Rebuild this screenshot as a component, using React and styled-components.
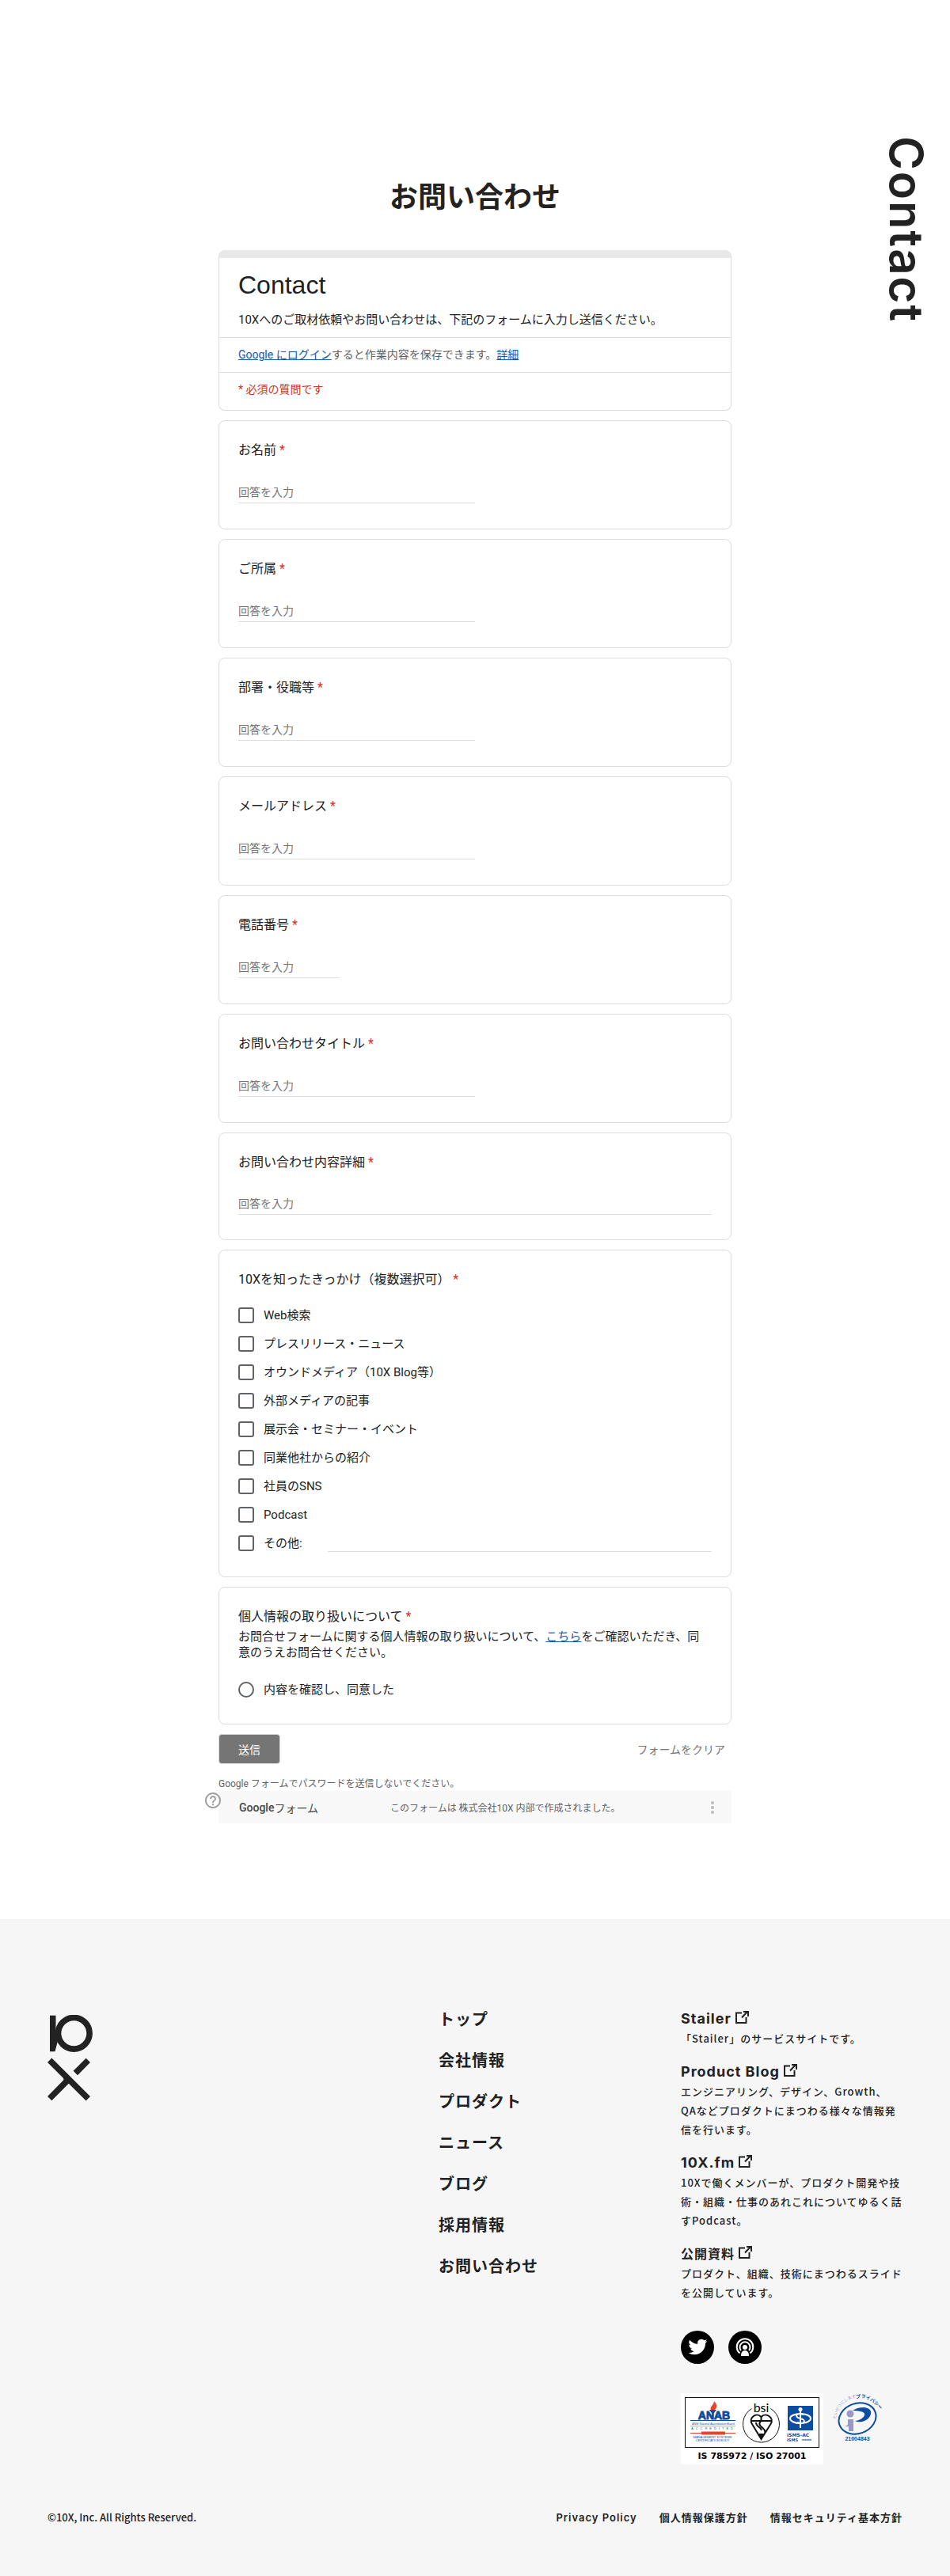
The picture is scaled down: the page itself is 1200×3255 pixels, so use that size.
import React from "react";
import styled, { createGlobalStyle } from "styled-components";

const jp = '"Noto Sans CJK JP", sans-serif';

const Global = createGlobalStyle`
  *, *::before, *::after { box-sizing: border-box; }
  body { margin: 0; background: #fff; color: #222; font-family: ${jp}; }
  h1, h2, p, ul, fieldset { margin: 0; padding: 0; border: 0; }
  ul { list-style: none; }
  a { color: inherit; text-decoration: none; }
  button, input { font: inherit; }
`;

const Main = styled.main`
  display: grid;
  grid-template-columns: minmax(0, 1fr) minmax(0, 648px) minmax(0, 1fr);
  padding-bottom: 121px;
`;
const Center = styled.div`grid-column: 2;`;
const PageTitle = styled.h1`
  padding-top: 218px;
  font-size: 36px;
  line-height: 56px;
  font-weight: 700;
  text-align: center;
`;
const SideTitle = styled.p`
  justify-self: end;
  margin: 172px 25px 0 0;
  writing-mode: vertical-rl;
  font: 600 58px/60px Inter, sans-serif;
  letter-spacing: 2px;
`;
const Form = styled.form`
  display: flex;
  flex-direction: column;
  gap: 12px;
  margin-top: 42px;
  font-family: Roboto, ${jp};
  color: #202124;
`;
const Card = styled.section`
  border: 1px solid #dadce0;
  border-radius: 8px;
  background: #fff;
`;
const IntroCard = styled(Card)`
  overflow: hidden;
  border-top: 10px solid #e8e8e8;
`;
const Intro = styled.div`
  padding: 12px 24px 11px;
  h2 { font: 400 32px/44px "Liberation Sans", sans-serif; }
  p { margin-top: 11px; font-size: 15px; line-height: 22px; }
`;
const Notice = styled.p`
  border-top: 1px solid #dadce0;
  padding: 11px 24px;
  font-size: 14px;
  line-height: 21px;
  color: ${(p) => (p.$alert ? "#c5372c" : "#5f6368")};
  ${(p) => p.$alert && "padding-bottom: 15px;"}
`;
const BlueLink = styled.a`
  color: #1558b0;
  text-decoration: underline;
`;
const Question = styled(Card)`
  padding: 25px 24px ${(p) => p.$bottom || "32px"};
`;
const Heading = styled.label`
  display: block;
  font-size: 16px;
  line-height: 24px;
`;
const Star = styled.span`
  color: #d93025;
  &::before { content: " "; }
`;
const TextBox = styled.input`
  display: block;
  width: ${(p) => p.$width};
  margin-top: ${(p) => (p.$short ? "26px" : "27px")};
  height: 28px;
  padding: 0;
  border: 0;
  border-bottom: 1px solid #dadce0;
  border-radius: 0;
  outline: 0;
  background: transparent;
  font-size: 14px;
  line-height: 24px;
  &::placeholder { color: #70757a; opacity: 1; }
`;
const Options = styled.div`
  display: flex;
  flex-direction: column;
  gap: 12px;
  margin-top: 21px;
`;
const Option = styled.div`
  display: flex;
  align-items: center;
  height: 24px;
  font-size: 15px;
  line-height: 24px;
  label { padding-left: 12px; }
`;
const Tick = styled.input`
  appearance: none;
  flex: none;
  width: 20px;
  height: 20px;
  margin: 0;
  border: 2px solid #5f6368;
  border-radius: ${(p) => (p.type === "radio" ? "50%" : "3px")};
  &:checked { background: #5f6368; }
`;
const OtherBox = styled.input`
  flex: 1;
  align-self: flex-start;
  min-width: 0;
  height: 23px;
  margin-left: 32px;
  padding: 0;
  border: 0;
  border-bottom: 1px solid #dadce0;
  outline: 0;
  background: transparent;
`;
const Consent = styled.p`
  padding-right: 8px;
  font-size: 15px;
  line-height: 20px;
  margin: 3px 0 25px;
`;
const Actions = styled.div`
  display: flex;
  justify-content: space-between;
  align-items: center;
  height: 38px;
`;
const Submit = styled.button`
  height: 38px;
  padding: 0 24px;
  border: 1px solid #ddd;
  border-radius: 4px;
  background: #757575;
  color: #fff;
  font-size: 14px;
`;
const Clear = styled.button`
  border: 0;
  padding: 0 8px;
  background: none;
  color: #757575;
  font-size: 14px;
`;
const Warning = styled.p`
  padding-top: 4px;
  font-size: 12px;
  line-height: 18px;
  color: #5f6368;
`;
const FormFoot = styled.div`
  position: relative;
  display: flex;
  align-items: center;
  height: 41px;
  padding: 0 22px 0 26px;
  background: #f8f8f8;
  color: #5f6368;
`;
const Brand = styled.a`
  display: flex;
  align-items: center;
  width: 191px;
  color: #444746;
  font-size: 14px;
  span { font: 500 14px Roboto, sans-serif; }
`;
const MadeBy = styled.p`
  flex: 1;
  font-size: 12px;
`;
const More = styled.button`
  display: grid;
  gap: 2px;
  padding: 0;
  border: 0;
  background: none;
  i { width: 4px; height: 4px; border-radius: 50%; background: #bdbdbd; }
`;
const Help = styled.button`
  position: absolute;
  left: -19px;
  top: 0;
  width: 24px;
  height: 24px;
  padding: 0;
  border: 0;
  background: none;
  svg { display: block; }
`;

const Footer = styled.footer`
  padding: 112px 60px 62px;
  background: #f6f6f6;
`;
const Columns = styled.div`
  display: grid;
  grid-template-columns: minmax(0, 494px) minmax(0, 306px) minmax(0, 280px);
  justify-content: space-between;
`;
const Logo = styled.svg`
  display: block;
  margin-top: 9px;
`;
const Nav = styled.ul`
  display: flex;
  flex-direction: column;
  gap: 24px;
  font-size: 20px;
  line-height: 28px;
  font-weight: 700;
  letter-spacing: 1px;
`;
const Product = styled.div`
  margin-bottom: 16px;
  p { font-size: 13px; line-height: 24px; font-weight: 500; letter-spacing: 1px; }
`;
const ProductLink = styled.a`
  display: flex;
  align-items: center;
  gap: 4px;
  height: 27px;
  font: ${(p) => (p.$jp ? `700 16px/27px ${jp}` : "700 18px/27px Inter, sans-serif")};
  letter-spacing: 1px;
  svg { display: block; margin-bottom: 3px; }
`;
const Social = styled.div`
  display: flex;
  gap: 18px;
  margin-top: 36px;
  a { display: block; height: 42px; }
`;
const Badges = styled.div`
  display: flex;
  align-items: flex-start;
  gap: 12px;
  margin-top: 37px;
  svg { display: block; overflow: visible; }
`;
const Bottom = styled.div`
  display: flex;
  justify-content: space-between;
  margin-top: 55px;
  font-size: 13px;
  line-height: 24px;
`;
const Copyright = styled.p`font-weight: 500;`;
const Legal = styled.div`
  display: flex;
  gap: 28px;
  font-weight: 700;
  letter-spacing: 1px;
`;
const PrivacyLink = styled.a`font: 600 13px/24px Inter, sans-serif;`;

const fields = [
  ["name", "お名前", "50%"],
  ["company", "ご所属", "50%"],
  ["role", "部署・役職等", "50%"],
  ["mail", "メールアドレス", "50%"],
  ["tel", "電話番号", "128px"],
  ["subject", "お問い合わせタイトル", "50%"],
  ["detail", "お問い合わせ内容詳細", "100%", true],
];
const sources = ["Web検索", "プレスリリース・ニュース", "オウンドメディア（10X Blog等）", "外部メディアの記事", "展示会・セミナー・イベント", "同業他社からの紹介", "社員のSNS", "Podcast", "その他:"];
const nav = ["トップ", "会社情報", "プロダクト", "ニュース", "ブログ", "採用情報", "お問い合わせ"];
const products = [
  ["Stailer", "「Stailer」のサービスサイトです。"],
  ["Product Blog", "エンジニアリング、デザイン、Growth、QAなどプロダクトにまつわる様々な情報発信を行います。"],
  ["10X.fm", "10Xで働くメンバーが、プロダクト開発や技術・組織・仕事のあれこれについてゆるく話すPodcast。"],
  ["公開資料", "プロダクト、組織、技術にまつわるスライドを公開しています。", true],
];

const External = () => (
  <svg width="18" height="18" viewBox="0 0 18 18" fill="none" stroke="#222" strokeWidth="2">
    <path d="M9 3.500H2V16h12.500V9M11 2h6v6M16.500 1.500L9 9.500" />
  </svg>
);

const IsoBadge = () => (
  <svg width="180" height="90" viewBox="0 0 180 90" role="img" aria-label="IS 785972 / ISO 27001">
    <rect width="180" height="90" fill="#fff" />
    <rect x="5.500" y="5.500" width="169" height="63" fill="none" stroke="#111" />
    <path d="M38 21c-2-4 4-6 4-11 4 4 4 8 1 11z" fill="#e8432e" />
    <path d="M36 21h9l-3 4h-3z" fill="#0d4da1" />
    <g fill="#0d4da1" fontFamily="Liberation Sans, sans-serif" textAnchor="middle">
      <text x="42" y="32.500" fontSize="14" fontWeight="700" stroke="#0d4da1" strokeWidth="1">ANAB</text>
      <rect x="12" y="34" width="57" height="1" />
      <text x="41" y="39.500" fontSize="3.500" fontStyle="italic">ANSI National Accreditation Board</text>
      <rect x="12" y="41" width="57" height="1" opacity=".4" />
      <text x="41" y="46" fontSize="4" letterSpacing="3">ACCREDITED</text>
      <text x="40" y="57" fontSize="4">MANAGEMENT SYSTEMS</text>
      <text x="40" y="61" fontSize="4">CERTIFICATION BODY</text>
    </g>
    <path d="M12 50.500h57" stroke="#e8432e" />
    <rect x="26" y="48.500" width="30" height="4" fill="#e8432e" />
    <path d="M89.500 19.500a23 23 0 1 0 24 0" fill="none" stroke="#111" strokeWidth="1" />
    <text x="101.500" y="24" fontSize="16" textAnchor="middle" fontFamily="Lato, sans-serif">bsi</text>
    <path d="M101.500 58L90 39c-5-7 5-16 11.500-9 6.500-7 17 2 12 9zM89 35h26M101.500 30v5M101.500 35c-8 7 9 9 4 17M95 37c0 6 6 5 7 10" fill="none" stroke="#111" strokeWidth="2" />
    <path d="M98 51h7l-3.500 7z" fill="#111" />
    <rect x="135" y="16" width="32" height="31" fill="#0d4da1" />
    <g fill="none" stroke="#fff" strokeWidth="2">
      <ellipse cx="151" cy="32" rx="13" ry="6" />
      <path d="M155 27c-11-3-11 4-4 5s7 8-4 5M151 23v21" />
    </g>
    <circle cx="151" cy="20.500" r="2.500" fill="#fff" />
    <g fill="#0d4da1" fontFamily="DejaVu Sans, sans-serif" fontWeight="700">
      <text x="134" y="54.500" fontSize="6">iSMS-AC</text>
      <text x="134" y="60.500" fontSize="5">ISMS</text>
      <text x="153" y="60" fontSize="3">ISR000</text>
    </g>
    <text x="90" y="83" fontSize="11" fontWeight="700" textAnchor="middle" fontFamily="DejaVu Sans, sans-serif">IS 785972 / ISO 27001</text>
  </svg>
);

const PrivacyMark = () => (
  <svg width="62" height="62" viewBox="0 0 62 62" role="img" aria-label="プライバシーマーク 21004843">
    <defs>
      <path id="arc" d="M4 33C6 6 40 -8 62 24" />
    </defs>
    <text fontFamily="Noto Sans CJK JP, sans-serif" fontSize="5" fill="#9a97c9">
      <textPath href="#arc">たいせつにします<tspan fontSize="6" fontWeight="700" fill="#0d4da1">プライバシー</tspan></textPath>
    </text>
    <ellipse cx="31" cy="32" rx="24" ry="19" transform="rotate(-20 31 32)" fill="none" stroke="#0d4da1" strokeWidth="2" />
    <path d="M25 22c10-7 28-5 22 7-4 7-14 9-19 6 6 0 13-5 12-9-1-3-8-4-15-4z" fill="#0d4da1" />
    <circle cx="22" cy="26" r="4.500" fill="#9a97c9" />
    <path d="M19 33h7v15h-6v-6h-5l4-2z" fill="#9a97c9" />
    <text x="31" y="60" fontFamily="Liberation Sans, sans-serif" fontSize="7" textAnchor="middle" fontWeight="700" fill="#0d4da1">21004843</text>
  </svg>
);

export default function App() {
  return (
    <>
      <Global />
      <Main>
        <Center>
          <PageTitle>お問い合わせ</PageTitle>
          <Form onSubmit={(e) => e.preventDefault()}>
            <IntroCard>
              <Intro>
                <h2>Contact</h2>
                <p>10Xへのご取材依頼やお問い合わせは、下記のフォームに入力し送信ください。</p>
              </Intro>
              <Notice><BlueLink href="#login">Google にログイン</BlueLink>すると作業内容を保存できます。<BlueLink href="#more">詳細</BlueLink></Notice>
              <Notice $alert>* 必須の質問です</Notice>
            </IntroCard>
            {fields.map(([id, label, width, short]) => (
              <Question key={id} $bottom={short ? "31px" : "32px"}>
                <Heading htmlFor={id}>{label}<Star>*</Star></Heading>
                <TextBox id={id} placeholder="回答を入力" $width={width} $short={short} />
              </Question>
            ))}
            <Question $bottom="30px">
              <Heading as="p">10Xを知ったきっかけ（複数選択可）<Star>*</Star></Heading>
              <Options>
                {sources.map((s, i) => (
                  <Option key={s}>
                    <Tick type="checkbox" id={`source${i}`} />
                    <label htmlFor={`source${i}`}>{s}</label>
                    {i === sources.length - 1 && <OtherBox aria-label="その他の回答" />}
                  </Option>
                ))}
              </Options>
            </Question>
            <Question $bottom="31px">
              <Heading as="p">個人情報の取り扱いについて<Star>*</Star></Heading>
              <Consent>お問合せフォームに関する個人情報の取り扱いについて、<BlueLink href="#privacy">こちら</BlueLink>をご確認いただき、同意のうえお問合せください。</Consent>
              <Option>
                <Tick type="radio" id="agree" />
                <label htmlFor="agree">内容を確認し、同意した</label>
              </Option>
            </Question>
            <Actions>
              <Submit type="submit">送信</Submit>
              <Clear type="reset">フォームをクリア</Clear>
            </Actions>
            <div>
              <Warning>Google フォームでパスワードを送信しないでください。</Warning>
              <FormFoot>
                <Help type="button" aria-label="ヘルプ">
                  <svg width="24" height="24" viewBox="0 0 24 24" fill="#9e9e9e"><path d="M11 18h2v-2h-2v2zm1-16C6.480 2 2 6.480 2 12s4.480 10 10 10 10-4.480 10-10S17.520 2 12 2zm0 18c-4.410 0-8-3.590-8-8s3.590-8 8-8 8 3.590 8 8-3.590 8-8 8zm0-14c-2.210 0-4 1.790-4 4h2c0-1.100.9-2 2-2s2 .9 2 2c0 2-3 1.750-3 5h2c0-2.250 3-2.500 3-5 0-2.210-1.790-4-4-4z" /></svg>
                </Help>
                <Brand href="#forms"><span>Google</span>フォーム</Brand>
                <MadeBy>このフォームは 株式会社10X 内部で作成されました。</MadeBy>
                <More type="button" aria-label="その他の操作"><i /><i /><i /></More>
              </FormFoot>
            </div>
          </Form>
        </Center>
        <SideTitle>Contact</SideTitle>
      </Main>
      <Footer>
        <Columns>
          <Logo width="58" height="110" viewBox="0 0 58 110" fill="none" stroke="#222" strokeWidth="7.600">
            <circle cx="33.300" cy="23.300" r="19.800" />
            <path d="M3 .7h7.500V20l3.500 9-4.500 17.300H3z" fill="#222" stroke="none" />
            <path d="M2.700 57.300l48.600 48.400M51.300 57.300L35.300 73.500M2.700 105.700L27 81" />
            <path d="M20 80l2 8 8-2-6-8z" fill="#222" stroke="none" />
          </Logo>
          <Nav>{nav.map((n) => <li key={n}><a href="#nav">{n}</a></li>)}</Nav>
          <div>
            {products.map(([title, text, isJp]) => (
              <Product key={title}>
                <ProductLink href="#product" $jp={isJp}>{title}<External /></ProductLink>
                <p>{text}</p>
              </Product>
            ))}
            <Social>
              <a href="#twitter" aria-label="Twitter">
                <svg width="42" height="42" viewBox="0 0 42 42"><circle cx="21" cy="21" r="21" /><path transform="translate(9.500 8.500)" fill="#fff" d="M23.950 4.570a10 10 0 0 1-2.820.770 4.960 4.960 0 0 0 2.160-2.720c-.950.550-2 .950-3.130 1.180a4.920 4.920 0 0 0-8.380 4.480C7.690 8.090 4.070 6.130 1.640 3.160a4.920 4.920 0 0 0 1.520 6.570 4.900 4.900 0 0 1-2.230-.610v.060a4.920 4.920 0 0 0 3.950 4.830 5 5 0 0 1-2.210.080 4.940 4.940 0 0 0 4.600 3.420A9.870 9.870 0 0 1 0 19.540a14 14 0 0 0 7.550 2.210c9.050 0 14-7.500 14-13.980v-.640a9.940 9.940 0 0 0 2.400-2.560z" /></svg>
              </a>
              <a href="#podcast" aria-label="Podcast">
                <svg width="42" height="42" viewBox="0 0 42 42"><circle cx="21" cy="21" r="21" /><g fill="none" stroke="#fff" strokeWidth="2"><path d="M14.500 28.500a10.300 10.300 0 1 1 13 0" /><path d="M16 25a6.500 6.500 0 1 1 10 0" /></g><circle cx="21" cy="21" r="3" fill="#fff" /><path d="M16 32c0-5 2-7 5-7s5 2 5 7z" fill="#fff" /></svg>
              </a>
            </Social>
            <Badges><IsoBadge /><PrivacyMark /></Badges>
          </div>
        </Columns>
        <Bottom>
          <Copyright>©10X, Inc. All Rights Reserved.</Copyright>
          <Legal>
            <PrivacyLink href="#pp">Privacy Policy</PrivacyLink>
            <a href="#pi">個人情報保護方針</a>
            <a href="#security">情報セキュリティ基本方針</a>
          </Legal>
        </Bottom>
      </Footer>
    </>
  );
}
